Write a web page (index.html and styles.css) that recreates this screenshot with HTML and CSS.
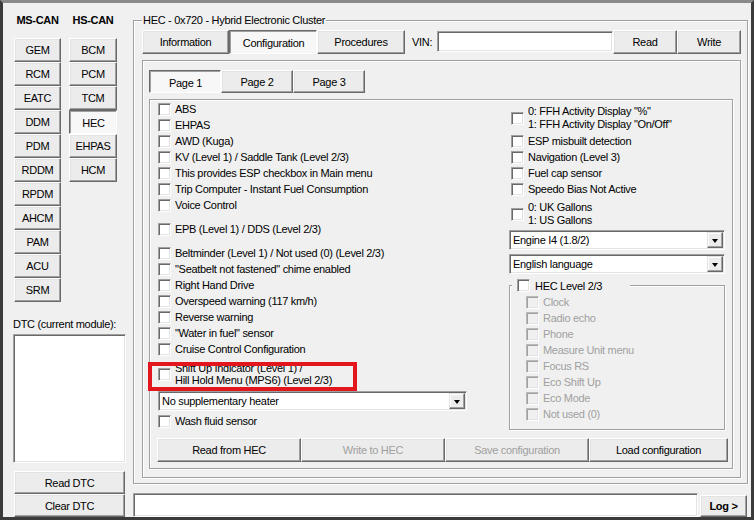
FILE: index.html
```html
<!DOCTYPE html>
<html lang="en">

<head>
    <meta charset="UTF-8">
    <title>HEC - Hybrid Electronic Cluster</title>
    <link rel="stylesheet" href="styles.css">
</head>

<body>

    <div class="window">
        <div class="side">
            <div class="can">
                <div class="can-col ms">
                    <div class="can-head">MS-CAN</div>
                    <button class="btn mod">GEM</button>
                    <button class="btn mod">RCM</button>
                    <button class="btn mod">EATC</button>
                    <button class="btn mod">DDM</button>
                    <button class="btn mod">PDM</button>
                    <button class="btn mod">RDDM</button>
                    <button class="btn mod">RPDM</button>
                    <button class="btn mod">AHCM</button>
                    <button class="btn mod">PAM</button>
                    <button class="btn mod">ACU</button>
                    <button class="btn mod">SRM</button>
                </div>
                <div class="can-col hs">
                    <div class="can-head">HS-CAN</div>
                    <button class="btn mod">BCM</button>
                    <button class="btn mod">PCM</button>
                    <button class="btn mod">TCM</button>
                    <button class="btn mod on">HEC</button>
                    <button class="btn mod">EHPAS</button>
                    <button class="btn mod">HCM</button>
                </div>
            </div>

            <div class="dtc">
                <div class="dtc-label">DTC (current module):</div>
                <div class="field dtc-list"></div>
                <button class="btn dtc-btn">Read DTC</button>
                <button class="btn dtc-btn">Clear DTC</button>
            </div>
        </div>

        <div class="main">
            <div class="group">
                <span class="group-title">HEC - 0x720 - Hybrid Electronic Cluster</span>

                <div class="topbar">
                    <button class="btn tab w87">Information</button>
                    <button class="btn tab w88 on">Configuration</button>
                    <button class="btn tab w88">Procedures</button>
                    <span class="vin-label">VIN:</span>
                    <div class="field vin"></div>
                    <button class="btn rw">Read</button>
                    <button class="btn rw">Write</button>
                </div>

                <div class="panel">
                    <div class="pagebar">
                        <button class="btn page-btn on">Page 1</button>
                        <button class="btn page-btn">Page 2</button>
                        <button class="btn page-btn">Page 3</button>
                    </div>

                    <div class="page">
                        <div class="cols">
                            <div class="col-left">
                                <label class="chk"><span class="box"></span>ABS</label>
                                <label class="chk"><span class="box"></span>EHPAS</label>
                                <label class="chk"><span class="box"></span>AWD (Kuga)</label>
                                <label class="chk"><span class="box"></span>KV (Level 1) / Saddle Tank (Level 2/3)</label>
                                <label class="chk"><span class="box"></span>This provides ESP checkbox in Main menu</label>
                                <label class="chk"><span class="box"></span>Trip Computer - Instant Fuel Consumption</label>
                                <label class="chk"><span class="box"></span>Voice Control</label>
                                <label class="chk sp"><span class="box"></span>EPB (Level 1) / DDS (Level 2/3)</label>
                                <label class="chk sp"><span class="box"></span>Beltminder (Level 1) / Not used (0) (Level 2/3)</label>
                                <label class="chk"><span class="box"></span>"Seatbelt not fastened" chime enabled</label>
                                <label class="chk"><span class="box"></span>Right Hand Drive</label>
                                <label class="chk"><span class="box"></span>Overspeed warning (117 km/h)</label>
                                <label class="chk"><span class="box"></span>Reverse warning</label>
                                <label class="chk"><span class="box"></span>"Water in fuel" sensor</label>
                                <label class="chk"><span class="box"></span>Cruise Control Configuration</label>
                                <label class="chk two tight shift">
                                    <span class="box"></span>
                                    <span>Shift Up Indicator (Level 1) /<br>Hill Hold Menu (MPS6) (Level 2/3)</span>
                                    <span class="mark"></span>
                                </label>
                                <div class="combo heater">
                                    <span class="combo-text">No supplementary heater</span>
                                    <span class="drop"></span>
                                </div>
                                <label class="chk wash"><span class="box"></span>Wash fluid sensor</label>
                            </div>

                            <div class="col-right">
                                <label class="chk two">
                                    <span class="box"></span>
                                    <span>0: FFH Activity Display "%"<br>1: FFH Activity Display "On/Off"</span>
                                </label>
                                <label class="chk esp"><span class="box"></span>ESP misbuilt detection</label>
                                <label class="chk"><span class="box"></span>Navigation (Level 3)</label>
                                <label class="chk"><span class="box"></span>Fuel cap sensor</label>
                                <label class="chk"><span class="box"></span>Speedo Bias Not Active</label>
                                <label class="chk two gallons">
                                    <span class="box"></span>
                                    <span>0: UK Gallons<br>1: US Gallons</span>
                                </label>
                                <div class="combo engine">
                                    <span class="combo-text">Engine I4 (1.8/2)</span>
                                    <span class="drop"></span>
                                </div>
                                <div class="combo lang">
                                    <span class="combo-text">English language</span>
                                    <span class="drop"></span>
                                </div>

                                <div class="subgroup">
                                    <label class="subgroup-title"><span class="box"></span>HEC Level 2/3</label>
                                    <label class="chk off"><span class="box"></span>Clock</label>
                                    <label class="chk off"><span class="box"></span>Radio echo</label>
                                    <label class="chk off"><span class="box"></span>Phone</label>
                                    <label class="chk off"><span class="box"></span>Measure Unit menu</label>
                                    <label class="chk off"><span class="box"></span>Focus RS</label>
                                    <label class="chk off"><span class="box"></span>Eco Shift Up</label>
                                    <label class="chk off"><span class="box"></span>Eco Mode</label>
                                    <label class="chk off"><span class="box"></span>Not used (0)</label>
                                </div>
                            </div>
                        </div>

                        <div class="actions">
                            <button class="btn act">Read from HEC</button>
                            <button class="btn act off">Write to HEC</button>
                            <button class="btn act off">Save configuration</button>
                            <button class="btn act last">Load configuration</button>
                        </div>
                    </div>
                </div>
            </div>

            <div class="logbar">
                <div class="field log"></div>
                <button class="btn log-btn">Log &gt;</button>
            </div>
        </div>
    </div>

</body>

</html>
```

FILE: styles.css
```css
body {
    margin: 0;
    background: #f0f0f0;
    font-family: "Liberation Sans", Arial, sans-serif;
    font-size: 11px;
    letter-spacing: -0.3px;
    color: #000;
}

.window {
    width: 754px;
    height: 520px;
    box-sizing: border-box;
    border: 3px solid #3b3b3b;
    border-top-color: #8a8a8a;
    display: flex;
    overflow: hidden;
}

/* classic 3D button */
.btn {
    font: inherit;
    letter-spacing: inherit;
    color: inherit;
    padding: 0;
    margin: 0;
    box-sizing: border-box;
    background: #ececec;
    border: 1px solid;
    border-color: #fff #696969 #696969 #fff;
    box-shadow: inset -1px -1px 0 #a0a0a0, inset 1px 1px 0 #e3e3e3;
    text-align: center;
}

.btn.on {
    background: #f7f7f7;
    border-color: #696969 #fff #fff #696969;
    box-shadow: inset 1px 1px 0 #a0a0a0;
    padding: 2px 0 0 1px;
}

.btn.off {
    color: #a0a0a0;
}

/* sunken white field */
.field {
    box-sizing: border-box;
    background: #fff;
    border: 1px solid;
    border-color: #a0a0a0 #fff #fff #a0a0a0;
    box-shadow: inset 1px 1px 0 #696969, inset -1px -1px 0 #e3e3e3;
}

/* left side */
.side {
    width: 127px;
    display: flex;
    flex-direction: column;
}

.can {
    display: flex;
    gap: 8px;
    margin: 11px 0 0 11px;
}

.can-col {
    display: flex;
    flex-direction: column;
}

.can-head {
    height: 24px;
    line-height: 13px;
    font-weight: bold;
    text-align: center;
}

.ms .mod {
    width: 47px;
}

.hs .mod {
    width: 48px;
}

.mod {
    height: 24px;
}

.dtc {
    margin-top: auto;
    padding-left: 10px;
    display: flex;
    flex-direction: column;
}

.dtc-label {
    line-height: 13px;
    margin-bottom: 3px;
}

.dtc-list {
    width: 113px;
    height: 129px;
}

.dtc-btn {
    width: 111px;
    height: 23px;
    margin-left: 1px;
}

.dtc-list + .dtc-btn {
    margin-top: 8px;
}

/* right side */
.main {
    margin: 17px 0 0 3px;
    width: 615px;
}

.group,
.panel,
.page,
.subgroup {
    position: relative;
    box-sizing: border-box;
    border: 1px solid #a0a0a0;
    box-shadow: inset 1px 1px 0 #fff, 1px 1px 0 #fff;
}

.group {
    height: 464px;
    padding: 9px 0 0 8px;
}

.group-title {
    position: absolute;
    top: -7px;
    left: 8px;
    padding: 0 1px;
    line-height: 13px;
    background: #f0f0f0;
}

.topbar {
    display: flex;
    height: 24px;
}

.tab {
    height: 24px;
}

.w87 {
    width: 87px;
}

.w88 {
    width: 88px;
}

.vin-label {
    width: 25px;
    margin-left: 7px;
    line-height: 24px;
}

.vin {
    width: 176px;
    height: 21px;
    margin-top: 1px;
}

.rw {
    width: 64px;
    height: 24px;
}

.panel {
    width: 599px;
    height: 418px;
    margin-top: 6px;
    padding: 9px 0 0 6px;
}

.pagebar {
    display: flex;
    height: 23px;
}

.page-btn {
    width: 72px;
    height: 23px;
}

.page {
    width: 584px;
    height: 370px;
    margin-top: 6px;
    padding-left: 8px;
}

.cols {
    display: grid;
    grid-template-columns: 309px 216px;
    column-gap: 42px;
    height: 330px;
}

.col-left {
    padding-top: 1px;
}

.col-right {
    padding-top: 5px;
}

.chk {
    display: flex;
    align-items: center;
    height: 16px;
    white-space: nowrap;
}

.box {
    width: 13px;
    height: 13px;
    flex: none;
    box-sizing: border-box;
    margin-right: 4px;
    background: #fff;
    border: 1px solid;
    border-color: #a0a0a0 #fff #fff #a0a0a0;
    box-shadow: inset 1px 1px 0 #696969, inset -1px -1px 0 #e3e3e3;
}

.chk.sp {
    margin-top: 8px;
}

.chk.two {
    height: 26px;
    line-height: 13px;
}

.chk.tight {
    height: 24px;
    line-height: 12px;
}

.shift {
    position: relative;
    margin-top: 5px;
}

/* red highlight drawn over the row */
.mark {
    position: absolute;
    left: -10px;
    top: 0;
    width: 209px;
    height: 29px;
    box-sizing: border-box;
    border: 4px solid #e3161e;
}

.wash {
    margin-top: 2px;
}

.col-right > .chk {
    margin-left: 2px;
}

.esp {
    margin-top: 2px;
}

.gallons {
    margin-top: 4px;
}

.combo {
    display: flex;
    align-items: center;
    height: 20px;
    box-sizing: border-box;
    background: #fff;
    border: 1px solid;
    border-color: #a0a0a0 #fff #fff #a0a0a0;
    box-shadow: inset 1px 1px 0 #696969, inset -1px -1px 0 #e3e3e3;
    padding: 1px;
}

.combo-text {
    flex: 1;
    padding-left: 2px;
}

.drop {
    width: 16px;
    height: 16px;
    box-sizing: border-box;
    display: flex;
    align-items: center;
    justify-content: center;
    background: #ececec;
    border: 1px solid;
    border-color: #e3e3e3 #696969 #696969 #e3e3e3;
    box-shadow: inset -1px -1px 0 #a0a0a0, inset 1px 1px 0 #fff;
}

.drop::after {
    content: "";
    border-left: 3.5px solid transparent;
    border-right: 3.5px solid transparent;
    border-top: 4px solid #000;
    margin-top: 1px;
}

.heater {
    margin-top: 5px;
}

.engine {
    margin-top: 3px;
}

.lang {
    margin-top: 4px;
}

.subgroup {
    height: 145px;
    margin-top: 11px;
    padding: 8px 0 0 16px;
}

.subgroup-title {
    position: absolute;
    top: -7px;
    left: 2px;
    width: 118px;
    height: 13px;
    box-sizing: border-box;
    padding-left: 5px;
    display: flex;
    align-items: center;
    background: #f0f0f0;
}

.subgroup-title .box {
    margin-right: 5px;
}

.chk.off {
    color: #a0a0a0;
}

.chk.off .box {
    background: #f0f0f0;
    border-color: #b9b9b9 #fff #fff #b9b9b9;
    box-shadow: inset 1px 1px 0 #a0a0a0, inset -1px -1px 0 #e3e3e3;
}

.actions {
    display: flex;
    margin: 8px 0 0 -1px;
}

.act {
    width: 144px;
    height: 24px;
}

.act.last {
    width: 139px;
}

.logbar {
    display: flex;
    align-items: flex-end;
    margin-top: 9px;
}

.log {
    width: 565px;
    height: 24px;
}

.log-btn {
    width: 47px;
    height: 22px;
    margin-left: 2px;
    font-weight: bold;
}
```
